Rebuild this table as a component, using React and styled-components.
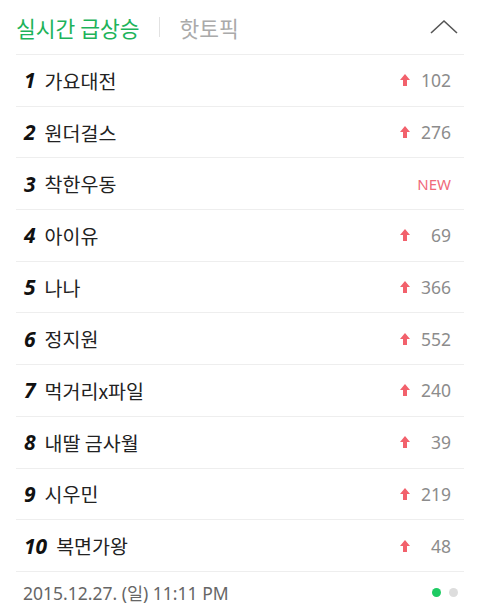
import React from "react";
import styled, { createGlobalStyle } from "styled-components";

const GlobalStyle = createGlobalStyle`
  body {
    margin: 0;
    background: #fff;
    font-family: "Noto Sans", "Noto Sans CJK KR", sans-serif;
  }
`;

const items = [
  { rank: 1, name: "가요대전", change: 102 },
  { rank: 2, name: "원더걸스", change: 276 },
  { rank: 3, name: "착한우동", isNew: true },
  { rank: 4, name: "아이유", change: 69 },
  { rank: 5, name: "나나", change: 366 },
  { rank: 6, name: "정지원", change: 552 },
  { rank: 7, name: "먹거리x파일", change: 240 },
  { rank: 8, name: "내딸 금사월", change: 39 },
  { rank: 9, name: "시우민", change: 219 },
  { rank: 10, name: "복면가왕", change: 48 },
];

const Panel = styled.section`
  padding: 0 16px;
  width: 448px;
`;

const Header = styled.header`
  display: flex;
  align-items: center;
  height: 54px;
  border-bottom: 1px solid #eeeeee;
`;

const Tab = styled.span`
  font-family: "Noto Sans CJK KR", sans-serif;
  font-size: 21.5px;
  color: ${(p) => (p.active ? "#1db35a" : "#aaaaaa")};
`;

const Divider = styled.span`
  width: 1px;
  height: 20px;
  background: #e2e2e2;
  margin: 0 20px 0 19px;
`;

const Toggle = styled.button`
  margin-left: auto;
  margin-right: 6px;
  border: 0;
  background: none;
  padding: 0;
  display: flex;
`;

const List = styled.ol`
  margin: 0;
  padding: 0;
  list-style: none;
`;

const Row = styled.li`
  display: flex;
  align-items: center;
  height: 50.7px;
  border-bottom: 1px solid #eeeeee;
  padding: 0 13px 0 8px;
`;

const Rank = styled.span`
  font-family: "Noto Sans", sans-serif;
  font-weight: 700;
  font-style: italic;
  font-size: 21px;
  color: #111;
  margin-right: 9px;
`;

const Name = styled.span`
  font-family: "Noto Sans CJK KR", sans-serif;
  font-size: 19.5px;
  color: #222;
`;

const Change = styled.span`
  margin-left: auto;
  width: 51px;
  display: flex;
  align-items: center;
  justify-content: space-between;
  font-family: "Noto Sans", sans-serif;
  font-size: 17.5px;
  color: #8c8c8c;
`;

const NewTag = styled.span`
  margin-left: auto;
  font-family: "Noto Sans", sans-serif;
  font-size: 15px;
  color: #f0697a;
`;

const Footer = styled.footer`
  display: flex;
  align-items: center;
  height: 42px;
  padding: 0 6px 0 7px;
`;

const Stamp = styled.span`
  font-family: "Noto Sans", "Noto Sans CJK KR", sans-serif;
  font-size: 17.5px;
  color: #666;
`;

const Dots = styled.span`
  margin-left: auto;
  display: flex;
  gap: 8px;
`;

const Dot = styled.i`
  width: 9px;
  height: 9px;
  border-radius: 50%;
  background: ${(p) => (p.on ? "#1ecb63" : "#dddddd")};
`;

function UpArrow() {
  return (
    <svg width="10" height="12" viewBox="0 0 10 12">
      <path d="M5 0 L10 6 L7 6 L7 12 L3 12 L3 6 L0 6 Z" fill="#f2616c" />
    </svg>
  );
}

export default function App() {
  return (
    <>
      <GlobalStyle />
      <Panel>
        <Header>
          <Tab active>실시간 급상승</Tab>
          <Divider />
          <Tab>핫토픽</Tab>
          <Toggle aria-label="접기">
            <svg width="28" height="16" viewBox="0 0 28 16">
              <path d="M1 14 L14 2 L27 14" fill="none" stroke="#555" strokeWidth="1.6" />
            </svg>
          </Toggle>
        </Header>
        <List>
          {items.map((it) => (
            <Row key={it.rank}>
              <Rank>{it.rank}</Rank>
              <Name>{it.name}</Name>
              {it.isNew ? (
                <NewTag>NEW</NewTag>
              ) : (
                <Change>
                  <UpArrow />
                  <span>{it.change}</span>
                </Change>
              )}
            </Row>
          ))}
        </List>
        <Footer>
          <Stamp>2015.12.27. (일) 11:11 PM</Stamp>
          <Dots>
            <Dot on />
            <Dot />
          </Dots>
        </Footer>
      </Panel>
    </>
  );
}
